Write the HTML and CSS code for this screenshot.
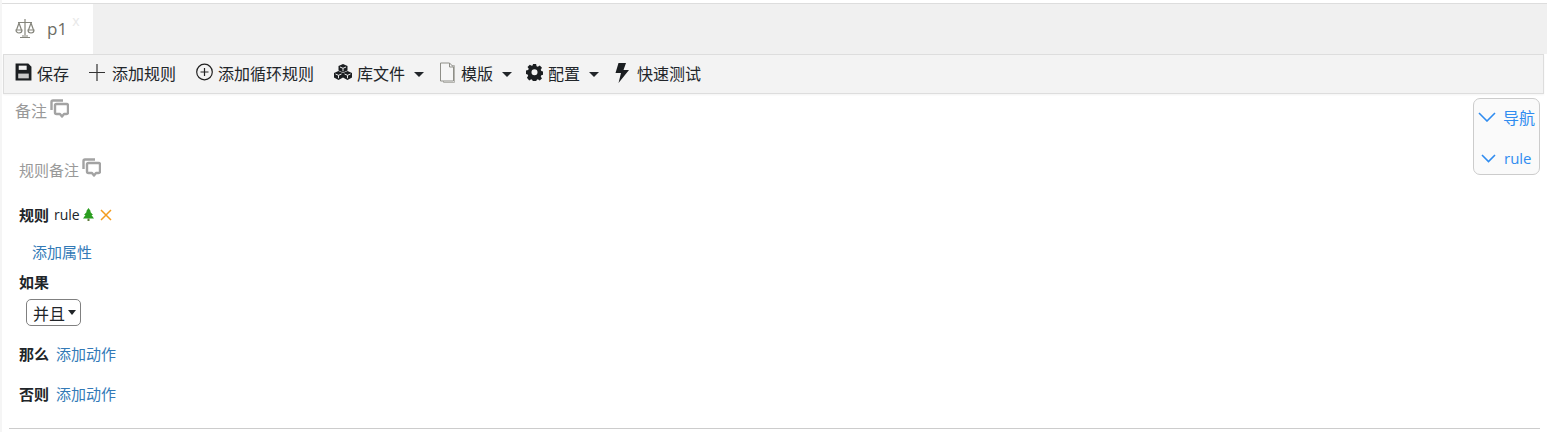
FILE: index.html
```html
<!DOCTYPE html>
<html lang="zh">
<head>
    <meta charset="UTF-8">
    <title>p1</title>
    <link rel="stylesheet" href="styles.css">
</head>
<body>
    <div class="tab-bar">
        <div class="tab">
            <svg class="tab-icon" width="20" height="21" viewBox="0 0 20 21" fill="none" stroke="#85857c" stroke-width="1.200">
                <path d="M10 1v16M3 4.500h14M5 19.500h10M7 18h6M4 5 1.500 12M4 5 6.500 12M16 5 13.500 12M16 5 18.500 12"/>
                <path d="M1 12h6a3 3 0 0 1-6 0zM13 12h6a3 3 0 0 1-6 0z"/>
            </svg>
            <span class="tab-name">p1</span>
            <span class="tab-close">x</span>
        </div>
    </div>

    <div class="toolbar">
        <a class="tool">
            <svg class="icon" width="17" height="18" viewBox="0 0 16 17"><path d="M.5.500h12L15.500 3.500V16.500H.5z" fill="#1b1e21"/><path d="M3.500 2.500h7.500v4H3.500z" fill="#f2f2f2"/><path d="M3 10h10v4.500H3z" fill="#c9c9c9"/></svg>
            保存
        </a>
        <a class="tool tool-plus">
            <svg class="icon" width="16" height="17" viewBox="0 0 16 17" fill="none" stroke="#333" stroke-width="1.200"><path d="M8 0v17M0 8.500h16"/></svg>
            添加规则
        </a>
        <a class="tool">
            <svg class="icon" width="17" height="18" viewBox="0 0 17 18" fill="none" stroke="#222" stroke-width="1.200"><circle cx="8.500" cy="9" r="7.800"/><path d="M8.500 5v8M4.500 9h8"/></svg>
            添加循环规则
        </a>
        <a class="tool tool-menu">
            <svg class="icon" width="18" height="16" viewBox="0 0 18 16">
                <path fill="#1b1e21" d="M9 0l4.500 2v4.500L9 8.500l-4.500-2V2z"/>
                <path fill="#1b1e21" d="M4.500 7l4.500 2v4.500L4.500 16 0 13.500V9z"/>
                <path fill="#1b1e21" d="M13.500 7L18 9v4.500L13.500 16 9 13.500V9z"/>
                <path fill="none" stroke="#fff" stroke-width="0.900" d="M6 3l3 1.300L12 3M9 4.300v3M1.500 10l3 1.300 3-1.300M4.500 11.300v3M10.500 10l3 1.300 3-1.300M13.500 11.300v3"/>
            </svg>
            库文件
            <i class="caret"></i>
        </a>
        <a class="tool tool-menu">
            <svg class="icon" width="17" height="21" viewBox="0 0 17 21" fill="#f6f6f6" stroke="#8f8f88"><path d="M4.500 3.500h11v17h-11z" stroke="#b5b5b0"/><path d="M1.500 1h9l4 4v14h-13z"/><path d="M10.500 1v4h4" fill="none"/></svg>
            模版
            <i class="caret"></i>
        </a>
        <a class="tool tool-menu tool-config">
            <svg class="icon" width="17" height="18" viewBox="0 0 18 18"><path fill="#1b1e21" fill-rule="evenodd" d="M7.300.5h3.400l.5 2.400 1.300.6 2.100-1.300 2.300 2.400-1.300 2 .6 1.400 2.300.5v3.400l-2.300.5-.6 1.300 1.300 2.100-2.400 2.300-2-1.300-1.300.6-.5 2.300H7.300l-.5-2.300-1.300-.6-2.100 1.300L1 15l1.300-2-.6-1.400L0 11V7.500l2.300-.5.600-1.400-1.300-2L4 1.200l2 1.300 1.300-.6zM9 6a3.200 3.200 0 1 0 0 6.400A3.200 3.200 0 0 0 9 6z"/></svg>
            配置
            <i class="caret"></i>
        </a>
        <a class="tool">
            <svg class="icon icon-bolt" width="18" height="20" viewBox="0 0 18 20"><path fill="#1b1e21" d="M4.500 0h7.500L9.500 7H15L4.500 20l2.500-10H1.500z"/></svg>
            快速测试
        </a>
    </div>

    <div class="nav-box">
        <div class="nav-item">
            <svg width="18" height="10" viewBox="0 0 18 10" fill="none" stroke="#2f8cf0" stroke-width="1.600"><path d="M1 1l8 8 8-8"/></svg>
            导航
        </div>
        <div class="nav-item nav-rule">
            <svg width="15" height="9" viewBox="0 0 15 9" fill="none" stroke="#2f8cf0" stroke-width="1.600"><path d="M1 1l6.500 6.500L14 1"/></svg>
            rule
        </div>
    </div>

    <div class="content">
        <div class="remark remark-top">
            备注
            <svg class="comment-icon" width="19" height="19" viewBox="0 0 19 19" fill="none" stroke="#a3a3a3" stroke-width="2.400" stroke-linejoin="round"><path d="M1.500 11V3q0-1.500 1.500-1.500h10"/><path d="M6.500 5h10q1.500 0 1.500 1.500v7q0 1.500-1.500 1.500H14l-2 2.500-2-2.500H6.500Q5 15 5 13.500v-7Q5 5 6.500 5z"/></svg>
        </div>

        <div class="remark remark-rule">
            规则备注
            <svg class="comment-icon" width="19" height="19" viewBox="0 0 19 19" fill="none" stroke="#a3a3a3" stroke-width="2.400" stroke-linejoin="round"><path d="M1.500 11V3q0-1.500 1.500-1.500h10"/><path d="M6.500 5h10q1.500 0 1.500 1.500v7q0 1.500-1.500 1.500H14l-2 2.500-2-2.500H6.500Q5 15 5 13.500v-7Q5 5 6.500 5z"/></svg>
        </div>

        <div class="rule-title">
            <b>规则</b>
            <span class="rule-name">rule</span>
            <svg class="tree" width="11" height="13" viewBox="0 0 11 13" fill="#2a9d1f"><path d="M5.500 0l2.500 3.500H7l3 3.500H8.500L11 10.500H0L2.500 7H1l3-3.500H3z"/><path d="M4.500 10.500h2V13h-2z" fill="#5d7a3a"/></svg>
            <svg class="del" width="12" height="12" viewBox="0 0 12 12" fill="none" stroke="#f39c1f" stroke-width="1.500"><path d="M1 1l10 10M11 1L1 11"/></svg>
        </div>

        <a class="link add-prop">添加属性</a>

        <div class="if-title"><b>如果</b></div>
        <div class="and-row">
            <span class="and-btn">并且<i class="caret caret-small"></i></span>
        </div>

        <div class="action-row action-then"><b>那么</b> <a class="link">添加动作</a></div>
        <div class="action-row action-else"><b>否则</b> <a class="link">添加动作</a></div>

        <hr class="divider">
    </div>
</body>
</html>
```

FILE: styles.css
```css
* {
    box-sizing: border-box;
}

html, body {
    height: 100%;
    overflow: hidden;
}

body {
    margin: 0;
    padding-top: 3px;
    position: relative;
    background-color: white;
    color: #212529;
    border-left: 2px solid #f5f5f5;
    font-family: "Open Sans", "Noto Sans CJK SC", sans-serif;
    font-size: 15px;
}

.tab-bar {
    height: 51px;
    background-color: #f0f0f0;
    border-top: 1px solid #ddd;
    display: flex;
}

.tab {
    width: 91px;
    background-color: white;
    display: flex;
    align-items: flex-start;
    padding: 14px 0 0 13px;
}

.tab-name {
    margin-left: 12px;
    margin-top: 1px;
    font-size: 17px;
    line-height: 20px;
    color: #6c6c64;
}

.tab-close {
    margin-left: 5px;
    margin-top: -5px;
    font-size: 14px;
    line-height: 16px;
    color: #e8e8e8;
}

.toolbar {
    height: 40px;
    margin-left: 1px;
    width: 1541px;
    background-color: #f3f3f3;
    border: 1px solid #ddd;
    box-shadow: 0 1px 2px rgba(0, 0, 0, 0.05);
    display: flex;
    align-items: center;
    padding-left: 11px;
}

.tool {
    display: flex;
    align-items: center;
    gap: 5px;
    margin-right: 20px;
    font-size: 16px;
    line-height: 20px;
    color: #212529;
    white-space: nowrap;
}

.tool .icon {
    flex: none;
    position: relative;
    top: -2px;
}

.tool .icon-bolt {
    top: -1px;
}

.tool-plus {
    gap: 7px;
}

.tool-menu {
    margin-right: 15px;
}

.tool-config {
    margin-left: -1px;
}

.caret {
    display: inline-block;
    width: 0;
    height: 0;
    margin-left: 4px;
    border-top: 5px solid #212529;
    border-left: 5px solid transparent;
    border-right: 5px solid transparent;
}

.caret-small {
    margin-left: 3px;
    border-top-width: 5px;
    border-left-width: 4.500px;
    border-right-width: 4.500px;
    position: relative;
    top: 0;
}

.nav-box {
    position: absolute;
    top: 98px;
    right: 7px;
    width: 67px;
    height: 77px;
    background-color: #fafafa;
    border: 1px solid #ccc;
    border-radius: 7px;
    color: #2f8cf0;
    font-size: 16px;
}

.nav-item {
    display: flex;
    align-items: center;
    gap: 7px;
    padding: 0 0 1px 4px;
    height: 36px;
}

.nav-rule {
    height: 40px;
    gap: 8px;
    padding: 6px 0 0 7px;
    font-size: 15px;
}

.content {
    padding: 0 7px;
}

.remark {
    display: flex;
    align-items: flex-start;
    color: #999;
    line-height: 20px;
}

.remark .comment-icon {
    margin-left: 3px;
    margin-top: -2px;
}

.remark-top {
    padding: 7px 0 0 6px;
    height: 49px;
    font-size: 16px;
}

.remark-rule {
    padding: 17px 0 0 10px;
    height: 47px;
    font-size: 15px;
}

.rule-title {
    display: flex;
    align-items: center;
    padding: 13px 0 0 10px;
    height: 36px;
    line-height: 20px;
}

.rule-name {
    margin-left: 5px;
    font-size: 14px;
}

.tree {
    margin-left: 3px;
}

.rule-title .del {
    margin-left: 6px;
}

.link {
    color: #337ab7;
}

.add-prop {
    display: block;
    margin: 16px 0 0 23px;
    line-height: 20px;
}

.if-title {
    margin: 10px 0 0 10px;
    line-height: 20px;
}

.and-row {
    margin: 7px 0 0 17px;
    height: 27px;
}

.and-btn {
    display: inline-flex;
    align-items: center;
    width: 55px;
    height: 27px;
    padding-left: 6px;
    border: 1px solid #808080;
    border-radius: 5px;
    font-size: 16px;
    background-color: white;
}

.action-row {
    display: flex;
    gap: 7px;
    padding-left: 10px;
    line-height: 20px;
}

.action-then {
    margin-top: 18px;
}

.action-else {
    margin-top: 20px;
}

.divider {
    margin: 24px 0 0 0;
    border: 0;
    border-top: 1px solid #ccc;
}
```
